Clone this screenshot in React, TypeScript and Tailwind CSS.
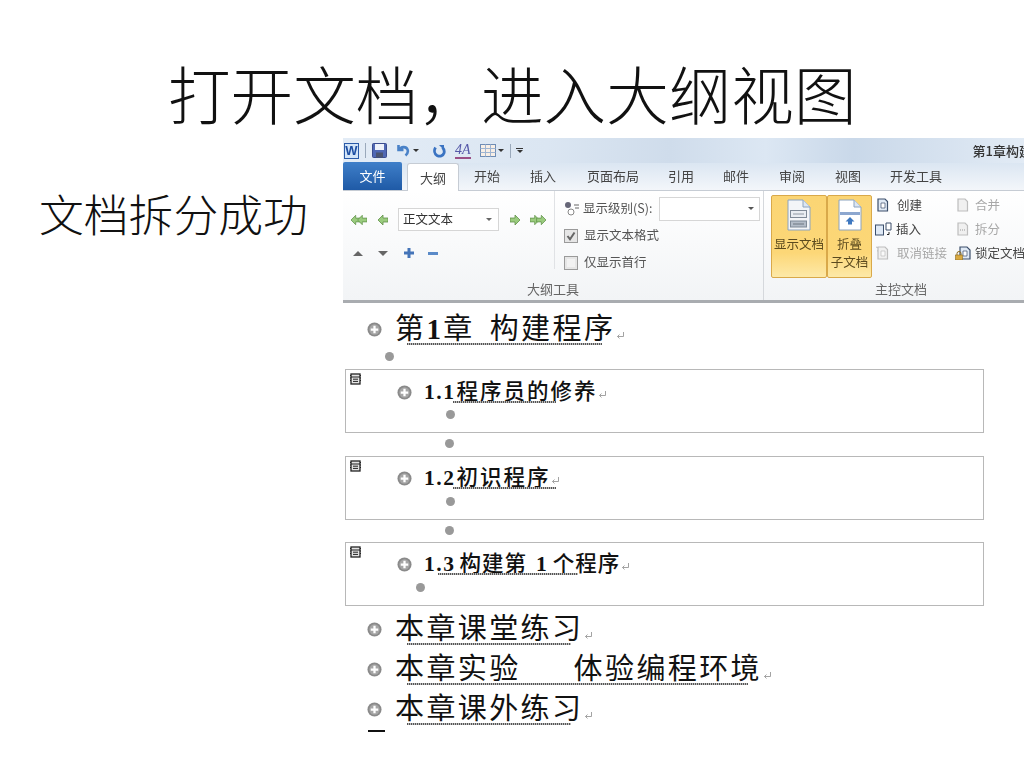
import React from "react";

const cjk = "font-['Noto_Sans_CJK_SC','Noto_Sans_CJK_JP',sans-serif]";
const outlineFont = "font-['Liberation_Serif','Noto_Sans_CJK_SC',serif]";

function PlusBullet() {
  return (
    <svg width="15" height="15" viewBox="0 0 16 16" className="shrink-0">
      <circle cx="8" cy="8" r="7.5" fill="#8a8a8a" />
      <circle cx="8" cy="8" r="5.5" fill="#a6a6a6" />
      <path d="M8 4v8M4 8h8" stroke="#fff" strokeWidth="2.4" />
    </svg>
  );
}

function Dot({ left }: { left: number }) {
  return <div className="w-[9px] h-[9px] rounded-full bg-[#999]" style={{ marginLeft: left }} />;
}

function ParaMark({ className }: { className: string }) {
  return (
    <svg width="9" height="9" viewBox="0 0 9 9" className={`self-end ml-[1px] shrink-0 ${className}`}>
      <path d="M7.5 1v4.500H1.500M3.500 3.500l-2 2 2 2" fill="none" stroke="#999" strokeWidth="0.9" />
    </svg>
  );
}

function Squiggle({ left, width, bottom }: { left: number; width: number; bottom: number }) {
  return (
    <span
      className="absolute h-[2px] bg-[repeating-linear-gradient(90deg,#555_0_1px,#bbb_1px_2px)]"
      style={{ left, width, bottom }}
    />
  );
}

function Heading({ children, squiggle }: { children: React.ReactNode; squiggle: number }) {
  return (
    <div className="flex items-center h-[40px] pl-[24px]">
      <PlusBullet />
      <div className={`relative flex ml-[13px] text-[29px] leading-[40px] tracking-[2.4px] text-[#111] whitespace-pre ${outlineFont}`}>
        <span>{children}</span>
        <ParaMark className="mb-[9px]" />
        <Squiggle left={12} width={squiggle} bottom={4} />
      </div>
    </div>
  );
}

function SubDocIcon() {
  return (
    <svg width="11" height="12" viewBox="0 0 11 12" className="absolute left-[4px] top-[3px]">
      <rect x="1" y="1" width="9" height="10" fill="#e4e4e4" stroke="#222" strokeWidth="1.300" />
      <path d="M1 4h9M3 6.200h5M3 8.400h5" stroke="#222" strokeWidth="1" />
      <path d="M0 2.500h1M0 5h1M0 7.500h1M10 2.500h1M10 5h1M10 7.500h1" stroke="#222" />
    </svg>
  );
}

function SubBox({ num, children, squiggle, dot, first }: { num: string; children: React.ReactNode; squiggle: [number, number]; dot: number; first?: boolean }) {
  return (
    <div className="relative ml-[2px] w-[639px] h-[64px] border border-[#b8b8b8] bg-white">
      <SubDocIcon />
      <div className={`flex items-center h-[30px] pl-[51px] ${first ? "mt-[7px]" : "mt-[6px]"}`}>
        <PlusBullet />
        <div className={`relative flex ml-[12px] text-[21.500px] leading-[30px] tracking-[2px] font-medium text-[#111] whitespace-pre ${outlineFont}`}>
          <b className="font-bold tracking-[1.500px] mr-[1px]">{num}</b>
          <span>{children}</span>
          <ParaMark className="mb-[8px]" />
          <Squiggle left={squiggle[0]} width={squiggle[1]} bottom={4} />
        </div>
      </div>
      <div className={first ? "mt-[3px]" : "mt-[4px]"}>
        <Dot left={dot} />
      </div>
    </div>
  );
}

function Arrow({ dir, double }: { dir: "l" | "r"; double?: boolean }) {
  const one = (x: number) => (
    <path
      key={x}
      d={dir === "l" ? `M${x} 5l5-5v3h5v4h-5v3z` : `M${x + 10} 5l-5-5v3h-5v4h5v3z`}
      fill="#9acb7e"
      stroke="#5f9148"
      strokeWidth="0.8"
    />
  );
  return (
    <svg width={double ? 16 : 10} height="10" viewBox={double ? "0 0 17 10" : "0 0 10 10"} className="shrink-0">
      {double ? [one(0), one(7)] : one(0)}
    </svg>
  );
}

function Check({ checked, label }: { checked?: boolean; label: string }) {
  return (
    <div className="flex items-center h-[27px]">
      <div className="w-[14px] h-[14px] border border-[#9a9a9a] bg-[#e6e6e6] flex items-center justify-center">
        {checked ? (
          <svg width="10" height="10" viewBox="0 0 10 10">
            <path d="M1.500 5l2.500 3.200L8.500 1.500" fill="none" stroke="#666" strokeWidth="2" />
          </svg>
        ) : (
          <div className="w-[8px] h-[8px] bg-[#f2f2f2]" />
        )}
      </div>
      <span className="ml-[6px] whitespace-nowrap">{label}</span>
    </div>
  );
}

function DocIcon({ kind }: { kind: "show" | "fold" }) {
  return (
    <svg width="24" height="32" viewBox="0 0 24 32" className="shrink-0">
      <path d="M1 1h15l7 7v23H1z" fill={kind === "show" ? "#f3f5f8" : "#fff"} stroke="#8ca3bf" />
      <path d="M16 1v7h7" fill="#dce6f2" stroke="#8ca3bf" />
      {kind === "show" ? (
        <>
          <rect x="3.500" y="11.500" width="16" height="7" fill="#e9edf2" stroke="#7f8a97" />
          <path d="M6 15h11" stroke="#8f98a3" />
          <rect x="3.500" y="22" width="16" height="6" fill="#b3bcc8" stroke="#7f8a97" />
          <path d="M6 25h11" stroke="#6d7681" />
        </>
      ) : (
        <>
          <rect x="2" y="13" width="20" height="3" fill="#8da7cf" />
          <path d="M12 18l-4.500 4.500h2.500v3h4v-3h2.500z" fill="#3e78c0" />
        </>
      )}
    </svg>
  );
}

type MiniKind = "create" | "insert" | "unlink" | "merge" | "split" | "lock";

function MiniIcon({ kind }: { kind: MiniKind }) {
  const gray = kind === "unlink" || kind === "merge" || kind === "split";
  const stroke = gray ? "#bdbdbd" : "#3c4f6b";
  const fill = gray ? "#f0f0f0" : "#dfe9f5";
  return (
    <svg width="18" height="14" viewBox="0 0 18 14" className="shrink-0">
      {kind === "insert" && <rect x="0.500" y="3" width="8" height="10" fill={fill} stroke={stroke} />}
      {kind === "insert" && <path d="M11 1h5v7h-5z" fill="#fff" stroke={stroke} />}
      {kind === "insert" && <path d="M14 10v2.500h-2" fill="none" stroke="#222" />}
      {kind === "unlink" && <path d="M1 1l5 2M2 5l4-1" stroke={stroke} />}
      {kind !== "insert" && (
        <>
          <path d={kind === "lock" ? "M5 1h7l3 3v9H5z" : "M3 1h7l2.500 2.500V13H3z"} fill={fill} stroke={stroke} strokeWidth="1.200" />
          {kind === "create" && <path d="M6 5h4v5H6z" fill="#fff" stroke={stroke} strokeWidth="0.700" />}
          {kind === "lock" && <path d="M8 5h4v5H8z" fill="#fff" stroke={stroke} strokeWidth="0.700" />}
          {kind === "split" && <path d="M5 8h1M7 8h1M9 8h1" stroke="#999" />}
          {kind === "unlink" && <path d="M6 5h4v5H6z" fill="#fafafa" stroke={stroke} strokeWidth="0.700" />}
        </>
      )}
      {kind === "lock" && (
        <>
          <path d="M2 9V7.500a2 2 0 0 1 4 0V9" fill="none" stroke="#8a6a20" />
          <rect x="0.500" y="9" width="7" height="5" fill="#d9a93f" stroke="#8a6a20" strokeWidth="0.600" />
        </>
      )}
    </svg>
  );
}

function MiniRow({ kind, label, muted, width }: { kind: MiniKind; label: string; muted?: boolean; width: string }) {
  return (
    <div className={`flex items-center whitespace-nowrap ${muted ? "text-[#a8a8a8]" : "text-[#444]"}`}>
      <div className={`shrink-0 ${width}`}>
        <MiniIcon kind={kind} />
      </div>
      <span>{label}</span>
    </div>
  );
}

function Caret() {
  return <span className="block w-0 h-0 border-x-[3px] border-x-transparent border-t-[3px] border-t-[#333]" />;
}

function QuickAccess() {
  return (
    <div className="flex items-center h-[25px] pl-[1px] bg-[linear-gradient(90deg,#e3ecf6_0%,#dbe6f2_30%,#cfdceb_48%,#dce7f3_62%,#c9d8e9_75%,#e2ebf5_100%)]">
      <div className="w-[15px] h-[16px] bg-[#d3e5f8] border border-[#2a5aa8] flex items-center justify-center text-[13px] leading-none font-bold text-[#1e4fa3] font-['Liberation_Sans',sans-serif]">W</div>
      <div className="w-px h-[15px] bg-[#9aa9bb] ml-[6px] mr-[6px]" />
      <svg width="15" height="15" viewBox="0 0 15 15" className="shrink-0">
        <rect x="0.500" y="0.500" width="14" height="14" rx="1" fill="#5068b4" stroke="#3b4c8e" />
        <rect x="3" y="1" width="9" height="6" fill="#eef2fa" />
        <rect x="4" y="9.500" width="7" height="5" fill="#4b5470" />
      </svg>
      <svg width="14" height="13" viewBox="0 0 14 13" className="ml-[9px] shrink-0">
        <path d="M2.500 1v5h5M3 6C5 2.500 10 2 11.500 5.500c.8 2-.2 4.500-2 6" fill="none" stroke="#4a82c8" strokeWidth="2.600" />
      </svg>
      <span className="ml-[3px]"><Caret /></span>
      <svg width="13" height="14" viewBox="0 0 13 14" className="ml-[14px] shrink-0">
        <path d="M2.500 3.500C0.800 6.500 1.500 10 4 11.500c3 1.500 6 .5 7-2.500.6-2-.1-4-1.500-5.500" fill="none" stroke="#3a73c2" strokeWidth="2.800" />
        <path d="M6 1h5v5z" fill="#3a73c2" />
      </svg>
      <div className="relative ml-[9px] w-[16px] h-[16px] text-[14px] leading-[14px] italic text-[#5558a8] font-['Liberation_Serif',serif]">
        4A
        <span className="absolute left-0 right-0 bottom-0 h-[2px] bg-[#9a4f86]" />
      </div>
      <svg width="16" height="13" viewBox="0 0 16 13" className="ml-[9px] shrink-0">
        <rect x="0.500" y="0.500" width="15" height="12" fill="#f8efe6" stroke="#6f8db5" />
        <path d="M0.500 4.500h15M0.500 8.500h15M5.500 0.500v12M10.500 0.500v12" stroke="#9fb5d2" />
      </svg>
      <span className="ml-[2px]"><Caret /></span>
      <div className="w-px h-[14px] bg-[#9aa9bb] ml-[6px] mr-[5px]" />
      <div className="flex flex-col items-center gap-[1px]">
        <span className="w-[7px] h-px bg-[#333]" />
        <Caret />
      </div>
      <span className={`ml-auto mr-[-8px] text-[13px] font-medium text-[#333] whitespace-nowrap ${cjk}`}>第1章构建</span>
    </div>
  );
}

const tabs: [string, number][] = [
  ["开始", 15],
  ["插入", 30],
  ["页面布局", 31],
  ["引用", 29],
  ["邮件", 29],
  ["审阅", 30],
  ["视图", 30],
  ["开发工具", 29],
];

function TabBar() {
  return (
    <div className={`flex items-end h-[28px] bg-[linear-gradient(180deg,#dbe6f2,#f3f6fa)] border-b border-[#c6ccd4] text-[13px] text-[#444] ${cjk}`}>
      <div className="w-[59px] h-[28px] rounded-t-[2px] bg-[linear-gradient(180deg,#3f7fc9,#1f5aa6)] text-white flex items-center justify-center">文件</div>
      <div className="ml-[5px] w-[52px] h-[28px] bg-white border border-b-0 border-[#c6ccd4] rounded-t-[3px] flex items-center justify-center -mb-px">大纲</div>
      {tabs.map(([name, gap]) => (
        <div key={name} className="h-[28px] flex items-center whitespace-nowrap" style={{ marginLeft: gap }}>{name}</div>
      ))}
    </div>
  );
}

function OutlineGroup() {
  return (
    <div className="relative w-[421px] shrink-0 flex border-r border-[#d5d8dc]">
      <div className="w-[212px] shrink-0 pl-[8px] pt-[17px] border-r border-[#e0e2e5] h-[78px]">
        <div className="flex items-center h-[23px]">
          <Arrow dir="l" double />
          <span className="ml-[11px]"><Arrow dir="l" /></span>
          <div className="ml-[10px] w-[101px] h-[23px] border border-[#d6d6d6] bg-white flex items-center pl-[4px] text-[#333]">
            正文文本
            <span className="ml-auto mr-[6px] w-0 h-0 border-x-[3px] border-x-transparent border-t-[3px] border-t-[#666]" />
          </div>
          <span className="ml-[11px]"><Arrow dir="r" /></span>
          <span className="ml-[10px]"><Arrow dir="r" double /></span>
        </div>
        <div className="flex items-center h-[12px] mt-[16px] pl-[2px]">
          <span className="w-0 h-0 border-x-[5px] border-x-transparent border-b-[5px] border-b-[#666]" />
          <span className="ml-[15px] w-0 h-0 border-x-[5px] border-x-transparent border-t-[5px] border-t-[#666]" />
          <svg width="10" height="10" viewBox="0 0 10 10" className="ml-[16px]">
            <path d="M5 0v10M0 5h10" stroke="#4474b8" strokeWidth="3" />
          </svg>
          <span className="ml-[14px] w-[10px] h-[3px] bg-[#5a8ac8]" />
        </div>
      </div>
      <div className="pl-[9px] pt-[5px] flex-1 text-[#555]">
        <div className="flex items-center h-[25px]">
          <svg width="15" height="15" viewBox="0 0 15 15" className="shrink-0">
            <circle cx="4" cy="4" r="3" fill="#667" />
            <circle cx="7" cy="11" r="3" fill="#fff" stroke="#888" />
            <path d="M10 4h5M11 7h4" stroke="#666" />
          </svg>
          <span className="ml-[4px] whitespace-nowrap">显示级别(S):</span>
          <div className="ml-auto mr-[3px] w-[101px] h-[24px] border border-[#d6d6d6] bg-white relative">
            <span className="absolute right-[5px] top-[9px] w-0 h-0 border-x-[3px] border-x-transparent border-t-[3px] border-t-[#555]" />
          </div>
        </div>
        <div className="pt-[1px]">
          <Check checked label="显示文本格式" />
          <Check label="仅显示首行" />
        </div>
      </div>
      <div className="absolute left-0 right-0 top-[88px] text-center text-[13px] text-[#666]">大纲工具</div>
    </div>
  );
}

function MasterGroup() {
  return (
    <div className="relative flex-1 pl-[7px] pt-[4px] flex">
      <div className="w-[56px] h-[83px] shrink-0 flex flex-col items-center pt-[3px] rounded-[2px] border border-[#d9a94a] bg-[linear-gradient(180deg,#fbd574,#fcd777_70%,#fde9a8)] leading-[20px] text-[#5b4a1e]">
        <DocIcon kind="show" />
        <span className="mt-[3px] whitespace-nowrap">显示文档</span>
      </div>
      <div className="w-[45px] h-[83px] shrink-0 flex flex-col items-center pt-[3px] rounded-[2px] border border-[#d9a94a] bg-[linear-gradient(180deg,#fbd574,#fcd777_70%,#fde9a8)] leading-[18px] text-[#5b4a1e]">
        <DocIcon kind="fold" />
        <span className="mt-[4px]">折叠</span>
        <span className="whitespace-nowrap">子文档</span>
      </div>
      <div className="ml-[3px] w-[80px] shrink-0 flex flex-col gap-[5px] leading-[19px]">
        <MiniRow kind="create" label="创建" width="w-[22px]" />
        <MiniRow kind="insert" label="插入" width="w-[21px]" />
        <MiniRow kind="unlink" label="取消链接" muted width="w-[22px]" />
      </div>
      <div className="shrink-0 flex flex-col gap-[5px] leading-[19px]">
        <MiniRow kind="merge" label="合并" muted width="w-[20px]" />
        <MiniRow kind="split" label="拆分" muted width="w-[20px]" />
        <MiniRow kind="lock" label="锁定文档" width="w-[20px]" />
      </div>
      <div className="absolute left-[111px] top-[88px] text-[13px] text-[#666] whitespace-nowrap">主控文档</div>
    </div>
  );
}

function Ribbon() {
  return (
    <div className="h-[165px] w-[681px] overflow-hidden blur-[0.4px] shrink-0">
      <QuickAccess />
      <TabBar />
      <div className={`flex h-[109px] bg-[linear-gradient(180deg,#fff,#f2f4f6)] text-[12.500px] border-b-[3px] border-[#a9acb0] box-content ${cjk}`}>
        <OutlineGroup />
        <MasterGroup />
      </div>
    </div>
  );
}

export default function App() {
  return (
    <div className={`w-[1024px] h-[768px] bg-white overflow-hidden ${cjk}`}>
      <div className="h-[138px] pt-[53px] pl-[168px] text-[62.600px] leading-[78px] font-light text-[#111] whitespace-nowrap">
        打开文档，进入大纲视图
      </div>
      <div className="flex">
        <div className="w-[343px] shrink-0 pl-[39px] pt-[52px] text-[44.800px] leading-[46px] font-light text-[#111] whitespace-nowrap">
          文档拆分成功
        </div>
        <div className="w-[681px]">
          <Ribbon />
          <div className="pt-[6px]">
            <Heading squiggle={195}>
              第<b>1</b>章<span className="ml-[15px]">构建程序</span>
            </Heading>
            <div className="mt-[3px] mb-[8px]"><Dot left={42} /></div>
            <SubBox first num="1.1" squiggle={[29, 103]} dot={100}>程序员的修养</SubBox>
            <div className="mt-[6px] mb-[8px]"><Dot left={102} /></div>
            <SubBox num="1.2" squiggle={[29, 103]} dot={100}>初识程序</SubBox>
            <div className="mt-[6px] mb-[7px]"><Dot left={102} /></div>
            <SubBox num="1.3" squiggle={[14, 140]} dot={70}>
              <span className="ml-[3px] tracking-[1px]">
                构建第<b className="font-bold ml-[9px] mr-[5px]">1</b>个程序
              </span>
            </SubBox>
            <div className="mt-[3px]">
              <Heading squiggle={164}>本章课堂练习</Heading>
              <Heading squiggle={341}>
                本章实验<span className="ml-[53px]">体验编程环境</span>
              </Heading>
              <Heading squiggle={164}>本章课外练习</Heading>
            </div>
            <div className="ml-[25px] mt-[1px] w-[17px] h-[2px] bg-[#111]" />
          </div>
        </div>
      </div>
    </div>
  );
}
